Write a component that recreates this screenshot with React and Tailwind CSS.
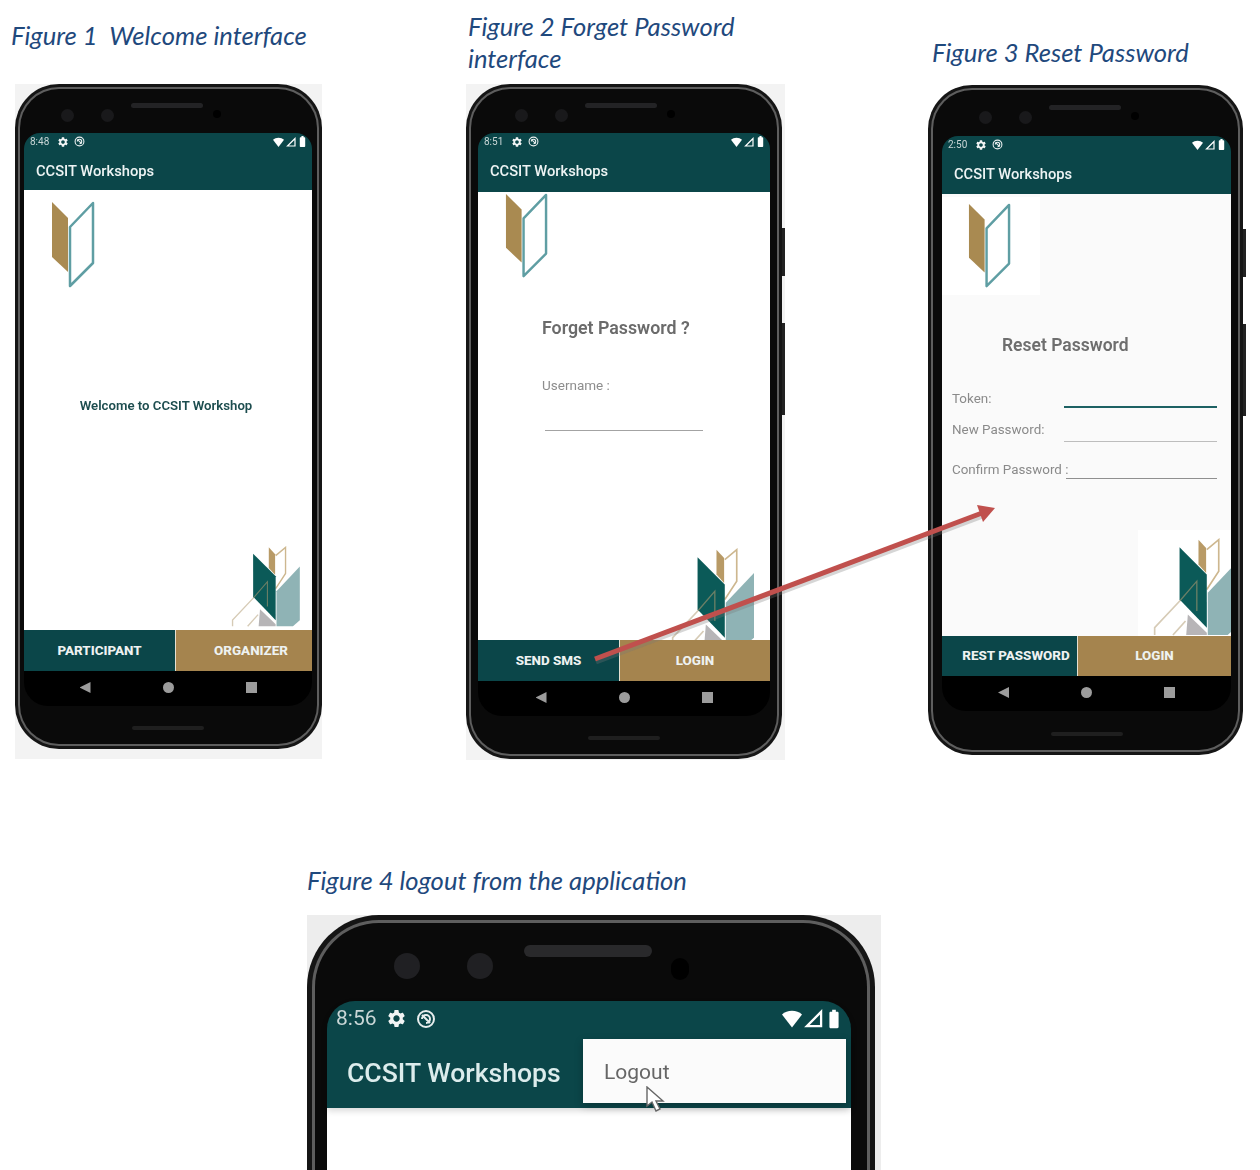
import { MdSettings, MdBatteryStd } from 'react-icons/md'

const SCREEN_FONT = 'font-["Roboto",sans-serif]'

const PHONE_1 = {
  size: 'w-[307px] h-[665px]',
  sides: 'pl-[4px] pr-[5px]',
  notch: 'h-[44px] pl-[37px] pt-[8px]',
  header: 'h-[57px]',
  buttons: 'h-[41px]',
}
const PHONE_2 = {
  size: 'w-[316px] h-[675px]',
  sides: 'pl-[7px] pr-[7px]',
  notch: 'h-[44px] pl-[37px] pt-[8px]',
  header: 'h-[59px]',
  buttons: 'h-[41px]',
}
const PHONE_3 = {
  size: 'w-[315px] h-[670px]',
  sides: 'pl-[9px] pr-[7px]',
  notch: 'h-[46px] pl-[37px] pt-[8px]',
  header: 'h-[58px]',
  buttons: 'h-[40px]',
}

function SmallLogo({ className }) {
  return (
    <svg viewBox="50 200 46 90" className={className}>
      <polygon points="52,202 68,218 68,272 52,257" fill="#a98a51" />
      <polygon points="70,227 93,203 93,263 70,286" fill="#fff" stroke="#5f9ea3" strokeWidth="2.5" strokeLinejoin="round" />
    </svg>
  )
}

function BigLogo({ className }) {
  return (
    <svg viewBox="100 50 250 295" className={className}>
      <polygon points="265,215 350,125 350,320 325,342 265,342" fill="#8fb3b5" />
      <polygon points="237,55 260,80 260,155 237,130" fill="#b89a66" />
      <polyline points="262,85 298,55 298,150 262,205" fill="none" stroke="#cdb78f" strokeWidth="5" />
      <polyline points="105,342 105,320 182,238" fill="none" stroke="#d6cbb6" strokeWidth="5" />
      <polyline points="160,342 198,300" fill="none" stroke="#d6cbb6" strokeWidth="5" />
      <polygon points="205,280 262,335 262,342 200,342" fill="#b7b5b7" />
      <polygon points="180,78 262,160 262,320 180,235" fill="#0b5a58" />
      <polyline points="182,238 232,180 232,270" fill="none" stroke="#6b7f66" strokeWidth="4" />
    </svg>
  )
}

function StatusBar({ time, size, textClass, padClass, gapClass }) {
  return (
    <div className={`flex items-center justify-between text-[#c9d6d6] ${padClass}`}>
      <div className={`flex items-center ${gapClass}`}>
        <span className={textClass}>{time}</span>
        <MdSettings size={size + 2} className="text-[#f2f5f5]" />
        <svg width={size + 1} height={size + 1} viewBox="0 0 20 20" fill="none" stroke="#e8eeee" strokeWidth="2">
          <circle cx="10" cy="10" r="8" />
          <path d="M6 10a4 4 0 1 1 4 4M6 6l8 8" />
        </svg>
      </div>
      <div className="flex items-center">
        <svg width={size + 1} height={size} viewBox="0 0 20 18"><path d="M0 5c5-5 15-5 20 0L10 18z" fill="#fff" /></svg>
        <svg width={size} height={size} viewBox="0 0 20 20" className="ml-[2px]"><path d="M18 3v15H3z" fill="none" stroke="#fff" strokeWidth="2.4" /></svg>
        <MdBatteryStd size={size + 3} className="text-white" />
      </div>
    </div>
  )
}

function Notch({ className }) {
  return (
    <div className={`flex items-center ${className}`}>
      <div className="w-[13px] h-[13px] rounded-full bg-[#19191b]" />
      <div className="w-[13px] h-[13px] rounded-full bg-[#19191b] ml-[27px]" />
      <div className="w-[72px] h-[5px] rounded-full bg-[#232325] ml-[17px] mb-[20px]" />
      <div className="w-[8px] h-[8px] rounded-full bg-black ml-[10px] mb-[2px]" />
    </div>
  )
}

function ActionButtons({ left, right, leftClass, rightClass, heightClass }) {
  return (
    <div className={`flex text-[13.4px] font-extrabold text-[#eef2f1] ${heightClass}`}>
      <div className={`bg-[#0b4649] flex items-center justify-center pt-[1px] ${leftClass}`}>{left}</div>
      <div className={`bg-[#a5844e] border-l border-[#e6e0d2] flex items-center justify-center pt-[1px] ${rightClass}`}>{right}</div>
    </div>
  )
}

function NavBar() {
  return (
    <div className="h-[35px] bg-black rounded-b-[24px] flex items-center justify-center gap-[72px] pb-[2px]">
      <div className="w-[11px] h-[11px] bg-[#9c9c9c] [clip-path:polygon(100%_0,100%_100%,0_50%)]" />
      <div className="w-[11px] h-[11px] bg-[#9c9c9c] rounded-full" />
      <div className="w-[11px] h-[11px] bg-[#9c9c9c]" />
    </div>
  )
}

function Device({ config, time, children, footer }) {
  return (
    <div className={`rounded-[44px] bg-[#151515] p-[3px] blur-[0.4px] ${config.size}`}>
      <div className="h-full rounded-[41px] bg-[#5e5e5e] p-[2px]">
        <div className={`h-full rounded-[39px] bg-[#0a0a0a] flex flex-col overflow-hidden ${config.sides} ${SCREEN_FONT}`}>
          <Notch className={config.notch} />
          <div className={`bg-[#0b4649] rounded-t-[16px] flex flex-col shrink-0 ${config.header}`}>
            <StatusBar time={time} size={10} textClass="text-[10px] mr-[3px]" padClass="pl-[6px] pr-[3px] pt-[1px]" gapClass="gap-[5px]" />
            <div className="pl-[12px] pt-[12px] text-[14.7px] font-medium leading-[20px] text-[#eef4f4]">CCSIT Workshops</div>
          </div>
          {children}
          {footer}
          <NavBar />
          <div className="flex-1 flex items-center justify-center pt-[6px]">
            <div className="w-[72px] h-[4px] rounded-full bg-[#1f1f1f]" />
          </div>
        </div>
      </div>
    </div>
  )
}

function Caption({ className, children }) {
  return (
    <div className={`font-["Lato",sans-serif] italic text-[25.6px] leading-[32px] text-[#1f497d] ${className}`}>
      {children}
    </div>
  )
}

function SideKeys() {
  return (
    <div className="absolute right-0 top-[144px] flex flex-col gap-[47px]">
      <div className="w-[3px] h-[48px] bg-[#222]" />
      <div className="w-[3px] h-[92px] bg-[#222]" />
    </div>
  )
}

function WelcomeScreen() {
  return (
    <div className="h-[440px] bg-white flex flex-col">
      <SmallLogo className="w-[46px] h-[90px] ml-[26px] mt-[10px]" />
      <div className="text-[13.2px] font-semibold text-[#1d4d4f] text-center mt-[108px] pr-[4px] leading-[16px]">Welcome to CCSIT Workshop</div>
      <BigLogo className="w-[69px] h-[81px] self-end mt-auto mr-[12px] mb-[3px]" />
    </div>
  )
}

function ForgetScreen() {
  return (
    <div className="h-[448px] bg-white flex flex-col overflow-hidden">
      <SmallLogo className="w-[45px] h-[88px] ml-[26px] shrink-0" />
      <div className="text-[17.8px] font-semibold text-[#6b6b6b] ml-[64px] mt-[37px] leading-[22px]">Forget Password ?</div>
      <div className="text-[13.5px] text-[#8d8d8d] ml-[64px] mt-[38px] leading-[16px]">Username :</div>
      <div className="w-[158px] h-[1px] bg-[#a3a3a3] ml-[67px] mt-[37px]" />
      <BigLogo className="w-[83px] h-[98px] shrink-0 self-end mt-auto mr-[16px] mb-[-6px]" />
    </div>
  )
}

function ResetField({ label, lineClass, rowClass, labelClass }) {
  return (
    <div className={`flex items-start justify-between pl-[10px] pr-[14px] text-[13.4px] text-[#8a8a8a] ${rowClass}`}>
      <span className={`leading-[16px] whitespace-nowrap ${labelClass}`}>{label}</span>
      <div className={`self-end ${lineClass}`} />
    </div>
  )
}

function ResetScreen() {
  return (
    <div className="h-[442px] bg-[#fafafa] flex flex-col">
      <div className="w-[98px] h-[98px] bg-white mt-[3px] flex items-center justify-center">
        <SmallLogo className="w-[45px] h-[88px] mr-[3px]" />
      </div>
      <div className="text-[17.5px] font-semibold text-[#6e6e6e] ml-[60px] mt-[39px] leading-[22px]">Reset Password</div>
      <ResetField label="Token:" rowClass="h-[24px] mt-[28px]" labelClass="pt-[7px]" lineClass="w-[153px] h-[2px] bg-[#1d6163]" />
      <ResetField label="New Password:" rowClass="h-[26px] mt-[8px]" labelClass="pt-[6px]" lineClass="w-[153px] h-[1px] bg-[#bdbdbd]" />
      <ResetField label="Confirm Password :" rowClass="h-[22px] mt-[15px]" labelClass="pt-[5px] w-[113px]" lineClass="w-[151px] h-[1px] bg-[#8f8f8f]" />
      <div className="w-[93px] h-[106px] bg-white self-end mt-auto flex items-end overflow-hidden">
        <BigLogo className="w-[83px] h-[98px] shrink-0 ml-[15px]" />
      </div>
    </div>
  )
}

function LogoutPhone() {
  return (
    <div className="w-[574px] h-[255px] bg-[#ededed] overflow-hidden">
      <div className="w-[568px] h-[400px] rounded-[72px] bg-[#151515] p-[5px] blur-[0.6px]">
        <div className="h-full rounded-[67px] bg-[#5e5e5e] p-[3px]">
          <div className={`h-full rounded-[64px] bg-[#0a0a0a] pl-[12px] pr-[16px] ${SCREEN_FONT}`}>
            <div className="h-[78px] flex items-center pl-[67px] pt-[8px]">
              <div className="w-[26px] h-[26px] rounded-full bg-[#202023]" />
              <div className="w-[26px] h-[26px] rounded-full bg-[#202023] ml-[47px]" />
              <div className="w-[128px] h-[12px] rounded-full bg-[#29292b] ml-[31px] mb-[30px]" />
              <div className="w-[18px] h-[22px] rounded-full bg-black ml-[19px] mt-[6px]" />
            </div>
            <div className="h-[107px] bg-[#0b4649] rounded-t-[28px] relative shadow-[0_3px_6px_rgba(0,0,0,0.15)]">
              <StatusBar time="8:56" size={19} textClass="text-[21px] mr-[0px]" padClass="pl-[9px] pr-[6px] pt-[2px]" gapClass="gap-[9px]" />
              <div className="pl-[20px] pt-[20px] text-[26.6px] font-medium leading-[36px] text-[#dcecec]">CCSIT Workshops</div>
              <div className="absolute left-[256px] top-[38px] w-[263px] h-[64px] bg-[#fbfbfb] shadow-[0_3px_8px_rgba(0,0,0,0.25)] flex items-center pl-[21px] pt-[4px] text-[21px] text-[#666]">
                Logout
                <svg width="20" height="28" viewBox="0 0 20 28" className="absolute left-[62px] top-[47px]">
                  <path d="M2 1v19l5-4 4 9 4-2-4-8h7z" fill="#fff" stroke="#666" strokeWidth="1.4" />
                </svg>
              </div>
            </div>
            <div className="h-[80px] bg-white" />
          </div>
        </div>
      </div>
    </div>
  )
}

export default function App() {
  return (
    <div className="relative w-[1260px] h-[1170px] bg-white overflow-hidden">
      <div className="flex h-[865px] items-start">
        <div className="w-[466px]">
          <Caption className="h-[84px] pl-[11px] pt-[19px]">Figure 1&nbsp; Welcome interface</Caption>
          <div className="ml-[15px] w-[307px] h-[675px] bg-[#f3f3f3]">
            <Device
              config={PHONE_1}
              time="8:48"
              footer={<ActionButtons left="PARTICIPANT" right="ORGANIZER" leftClass="w-[151px]" rightClass="flex-1 pl-[14px]" heightClass={PHONE_1.buttons} />}
            >
              <WelcomeScreen />
            </Device>
          </div>
        </div>
        <div className="w-[462px]">
          <Caption className="h-[84px] pl-[2px] pt-[10px]">Figure 2 Forget Password<br />interface</Caption>
          <div className="relative w-[319px] h-[676px] bg-[#f3f3f3]">
            <Device
              config={PHONE_2}
              time="8:51"
              footer={<ActionButtons left="SEND SMS" right="LOGIN" leftClass="w-[141px]" rightClass="flex-1" heightClass={PHONE_2.buttons} />}
            >
              <ForgetScreen />
            </Device>
            <SideKeys />
          </div>
        </div>
        <div className="w-[332px]">
          <Caption className="h-[85px] pl-[4px] pt-[36px]">Figure 3 Reset Password</Caption>
          <div className="relative w-[318px]">
            <Device
              config={PHONE_3}
              time="2:50"
              footer={<ActionButtons left="REST PASSWORD" right="LOGIN" leftClass="w-[135px] pl-[13px]" rightClass="flex-1" heightClass={PHONE_3.buttons} />}
            >
              <ResetScreen />
            </Device>
            <SideKeys />
          </div>
        </div>
      </div>
      <div className="pl-[307px]">
        <Caption className="h-[51px] mt-[-1px]">Figure 4 logout from the application</Caption>
        <LogoutPhone />
      </div>
      <svg className="absolute left-0 top-0 pointer-events-none" width="1260" height="800">
        <line x1="595" y1="659" x2="982" y2="513" stroke="#777" strokeOpacity="0.3" strokeWidth="5" transform="translate(1 3)" />
        <line x1="595" y1="659" x2="982" y2="513" stroke="#c0504d" strokeWidth="5" />
        <polygon points="995,508 977,505 983,522" fill="#c0504d" />
      </svg>
    </div>
  )
}
